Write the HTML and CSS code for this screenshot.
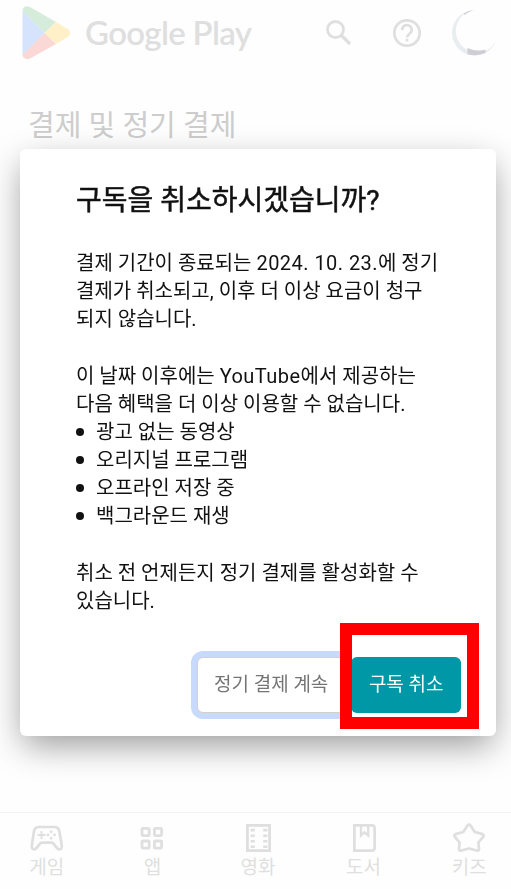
FILE: index.html
```html
<!DOCTYPE html>
<html lang="ko">
<head>
    <meta charset="UTF-8">
    <meta name="viewport" content="width=device-width, initial-scale=1.0">
    <title>Google Play</title>
    <link rel="stylesheet" href="styles.css">
</head>
<body>
    <header class="header">
        <svg class="play-logo" width="50" height="54" viewBox="0 0 50 54">
            <path fill="#d6ecdb" d="M1.500 5C1.500 1 5-1 9 1L35 16 23.500 27Z"/>
            <path fill="#d6e3fd" d="M1.500 5L23.500 27 1.500 49Z"/>
            <path fill="#fff0c8" d="M35 16L46 22.500C50 25 50 29 46 31.500L35 38 23.500 27Z"/>
            <path fill="#fad8d5" d="M1.500 49L23.500 27 35 38 9 52.500C5 54 1.500 52 1.500 49Z"/>
        </svg>
        <span class="brand">Google Play</span>
        <svg class="search-icon" width="28" height="28" viewBox="0 0 28 28" fill="none" stroke="#dfdfdf">
            <circle cx="10.500" cy="10.500" r="8" stroke-width="2.800"/>
            <path d="M16.500 16.500L25 25" stroke-width="3.200"/>
        </svg>
        <svg class="help-icon" width="30" height="30" viewBox="0 0 30 30" fill="none" stroke="#dfdfdf" stroke-width="2.700">
            <circle cx="15" cy="15" r="12.700"/>
            <path d="M10.300 12.200A4.700 4.700 0 1 1 17.800 15.500C16 16.900 15 17.700 15 19.600"/>
            <path d="M15 20.900V23.500"/>
        </svg>
        <svg class="avatar" width="48" height="48" viewBox="0 0 48 48">
            <path fill="#e8edf0" d="M22 1A22.800 22.800 0 1 0 44.500 31A21.300 21.300 0 1 1 22 1Z"/>
            <path fill="#cfced5" d="M15.500 39Q24 43 33.500 40.800V44Q25 47.500 15.500 45.300Z"/>
            <path fill="#cfced5" d="M12 4.500Q16 1.500 22 1Q17 2.500 12 6Z"/>
        </svg>
    </header>

    <h1 class="page-title">결제 및 정기 결제</h1>

    <nav class="bottom-nav">
        <div class="nav-item">
            <svg width="36" height="32" viewBox="0 0 36 32" fill="none" stroke="#dfdfdf" stroke-width="2.700" stroke-linejoin="round">
                <path d="M10 4H25.500Q29.500 4 30.300 8L32.800 22.500Q33.200 26.500 30 26.300C27.500 26 25 19.700 22.800 19.700H12.700C10.500 19.700 8 26 5.500 26.300Q2.500 26.500 2.800 22.500L5 8Q6 4 10 4Z"/>
                <path d="M12.500 8V16M8.500 12H16.500" stroke-width="1.800"/>
                <g fill="#dfdfdf" stroke="none"><circle cx="22.200" cy="8.800" r="1.400"/><circle cx="19" cy="12" r="1.400"/><circle cx="25.500" cy="12" r="1.400"/><circle cx="22.200" cy="15.300" r="1.400"/></g>
            </svg>
            <span>게임</span>
        </div>
        <div class="nav-item">
            <svg width="36" height="32" viewBox="0 0 36 32" fill="none" stroke="#dfdfdf" stroke-width="2.800">
                <rect x="8" y="5.400" width="7.200" height="7.200" rx="1"/>
                <rect x="20.400" y="5.400" width="7.200" height="7.200" rx="1"/>
                <rect x="8" y="18" width="7.200" height="7.200" rx="1"/>
                <rect x="20.400" y="18" width="7.200" height="7.200" rx="1"/>
            </svg>
            <span>앱</span>
        </div>
        <div class="nav-item">
            <svg width="36" height="32" viewBox="0 0 36 32" fill="none" stroke="#dfdfdf">
                <rect x="7.400" y="2.400" width="22.200" height="25.200" stroke-width="2.800"/>
                <path d="M12.700 5.800V25M25.300 5.800V25" stroke-width="4.200" stroke-dasharray="2.600 3"/>
            </svg>
            <span>영화</span>
        </div>
        <div class="nav-item">
            <svg width="36" height="32" viewBox="0 0 36 32" fill="none" stroke="#dfdfdf" stroke-width="2.700">
                <path d="M8.400 2.400H26Q28.600 2.400 28.600 5V25Q28.600 27.600 26 27.600H8.400Z"/>
                <path d="M15 3V12.500L18.500 9.300 22.200 12.500V3" stroke-width="2.300"/>
            </svg>
            <span>도서</span>
        </div>
        <div class="nav-item">
            <svg width="36" height="32" viewBox="0 0 36 32" fill="none" stroke="#dfdfdf" stroke-width="2.700" stroke-linejoin="round">
                <path d="M16.600 2.300Q18 .7 19.400 2.300L23.700 9 31.500 11.100Q33.300 12 32.300 13.700L27.400 19.500 28 26Q27.600 28.200 25.500 27.500L18 25.500 10.500 27.500Q8.400 28.200 8 26L8.600 19.500 3.700 13.700Q2.700 12 4.500 11.100L12.300 9Z"/>
            </svg>
            <span>키즈</span>
        </div>
    </nav>

    <div class="overlay">
        <div class="dialog">
            <h2 class="dialog-title">구독을 취소하시겠습니까?</h2>
            <div class="dialog-text">
                <p>결제 기간이 종료되는 <span class="latin">2024. 10. 23.</span>에 정기<br>결제가 취소되고, 이후 더 이상 요금이 청구<br>되지 않습니다.</p>
                <p>이 날짜 이후에는 <span class="latin">YouTube</span>에서 제공하는<br>다음 혜택을 더 이상 이용할 수 없습니다.</p>
                <ul class="benefits">
                    <li>광고 없는 동영상</li>
                    <li>오리지널 프로그램</li>
                    <li>오프라인 저장 중</li>
                    <li>백그라운드 재생</li>
                </ul>
                <p>취소 전 언제든지 정기 결제를 활성화할 수<br>있습니다.</p>
            </div>
            <div class="actions">
                <button class="btn btn-keep">정기 결제 계속</button>
                <button class="btn btn-cancel">구독 취소</button>
                <div class="highlight"></div>
            </div>
        </div>
    </div>
</body>
</html>
```

FILE: styles.css
```css
* {
    box-sizing: border-box;
}

body {
    margin: 0;
    height: 100vh;
    display: flex;
    flex-direction: column;
    overflow: hidden;
    background-color: #fefefe;
    font-family: Roboto, "Noto Sans CJK KR", sans-serif;
}

h1, h2, p, ul {
    margin: 0;
    padding: 0;
    font-weight: 400;
}

.header {
    display: flex;
    align-items: center;
    height: 66px;
    padding-left: 21px;
}

.play-logo {
    margin-right: 14px;
}

.brand {
    width: 167px;
    font-family: Lato, sans-serif;
    font-size: 33px;
    font-weight: 600;
    line-height: 40px;
    letter-spacing: -0.7px;
    color: #dfdfdf;
    white-space: nowrap;
    padding-bottom: 2px;
}

.search-icon {
    margin-left: 73px;
}

.help-icon {
    margin-left: 39px;
}

.avatar {
    margin-left: 30px;
    flex-shrink: 0;
}

.page-title {
    margin: 39px 0 0 28px;
    font-size: 29px;
    line-height: 42px;
    color: #cdcdcd;
    white-space: nowrap;
}

.bottom-nav {
    display: flex;
    height: 77px;
    margin-top: auto;
    padding-top: 10px;
    margin-right: -17px;
    border-top: 1px solid #f3f3f3;
}

.nav-item {
    flex: 1;
    display: flex;
    flex-direction: column;
    align-items: center;
    padding-right: 12px;
    font-size: 19px;
    line-height: 25px;
    color: #dfdfdf;
}

/* Dialog */
.overlay {
    position: fixed;
    inset: 0;
    padding: 149px 15px 0 20px;
}

.dialog {
    height: 587px;
    padding: 32px 35px 0 56px;
    border-radius: 6px;
    background: white;
    box-shadow: 0 12px 34px -3px rgba(0, 0, 0, 0.4);
}

.dialog-title {
    font-size: 28px;
    line-height: 40px;
    color: #111;
    white-space: nowrap;
    -webkit-text-stroke: 0.5px #111;
}

.dialog-text {
    margin-top: 28px;
    font-size: 20px;
    line-height: 28.15px;
    color: #111;
    white-space: nowrap;
}

.latin {
    letter-spacing: 0.45px;
}

.dialog-text p + p,
.benefits + p {
    margin-top: 28.15px;
}

.benefits {
    list-style: none;
}

.benefits li {
    display: flex;
    align-items: center;
}

.benefits li::before {
    content: "";
    width: 8px;
    height: 8px;
    margin-right: 12px;
    border-radius: 50%;
    background: #111;
}

.actions {
    position: relative;
    display: flex;
    margin-top: 42px;
}

.btn {
    height: 56px;
    padding: 0 0 6px;
    border-radius: 6px;
    font-family: inherit;
    font-size: 19px;
    white-space: nowrap;
}

.btn-keep {
    width: 149px;
    margin-left: 121px;
    margin-right: 6px;
    border: 1px solid #d0d0d0;
    background: white;
    color: #757575;
    box-shadow: 0 0 0 6px #c7dafc;
}

.btn-cancel {
    width: 110px;
    border: none;
    background: #0097a7;
    color: white;
}

/* Red frame around the cancel button */
.highlight {
    position: absolute;
    top: -34px;
    left: 264px;
    width: 139px;
    height: 106px;
    border: 12px solid #ff0000;
}
```
